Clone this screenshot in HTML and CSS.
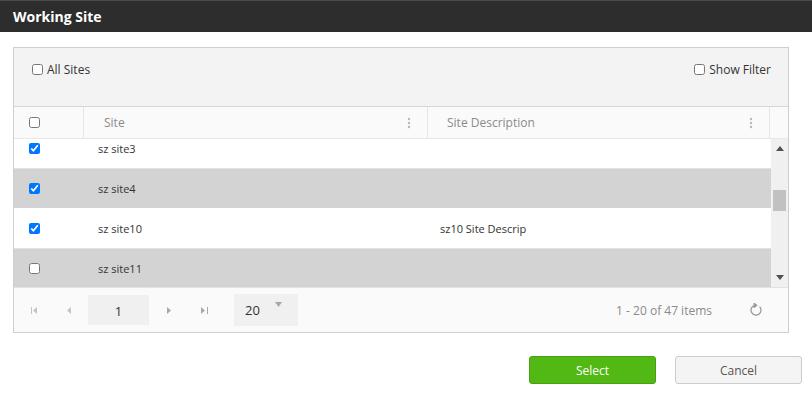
FILE: index.html
```html
<!DOCTYPE html>
<html lang="en">
<head>
    <meta charset="UTF-8">
    <title>Working Site</title>
    <link rel="stylesheet" href="styles.css">
</head>
<body>
    <header class="titlebar">Working Site</header>

    <main class="dialog">
        <div class="grid">
            <div class="toolbar">
                <label class="check-label"><input type="checkbox"> All Sites</label>
                <label class="check-label"><input type="checkbox"> Show Filter</label>
            </div>

            <div class="grid-head">
                <div class="col-check"><input type="checkbox"></div>
                <div class="col-site head-cell">
                    <span>Site</span>
                    <svg class="menu-dots" width="4" height="12" viewBox="0 0 4 12"><circle cx="2" cy="2" r="1.2"/><circle cx="2" cy="6" r="1.2"/><circle cx="2" cy="10" r="1.2"/></svg>
                </div>
                <div class="col-desc head-cell">
                    <span>Site Description</span>
                    <svg class="menu-dots" width="4" height="12" viewBox="0 0 4 12"><circle cx="2" cy="2" r="1.2"/><circle cx="2" cy="6" r="1.2"/><circle cx="2" cy="10" r="1.2"/></svg>
                </div>
                <div class="col-scroll"></div>
            </div>

            <div class="grid-body">
                <div class="rows">
                    <div class="rows-inner">
                        <div class="row">
                            <div class="col-check"><input type="checkbox" checked></div>
                            <div class="col-site">sz site3</div>
                            <div class="col-desc"></div>
                        </div>
                        <div class="row alt">
                            <div class="col-check"><input type="checkbox" checked></div>
                            <div class="col-site">sz site4</div>
                            <div class="col-desc"></div>
                        </div>
                        <div class="row">
                            <div class="col-check"><input type="checkbox" checked></div>
                            <div class="col-site">sz site10</div>
                            <div class="col-desc">sz10 Site Descrip</div>
                        </div>
                        <div class="row alt">
                            <div class="col-check"><input type="checkbox"></div>
                            <div class="col-site">sz site11</div>
                            <div class="col-desc"></div>
                        </div>
                    </div>
                </div>
                <div class="scrollbar">
                    <svg width="8" height="5" viewBox="0 0 8 5"><path d="M0 5 L4 0 L8 5 Z"/></svg>
                    <div class="thumb"></div>
                    <svg width="8" height="5" viewBox="0 0 8 5"><path d="M0 0 L4 5 L8 0 Z"/></svg>
                </div>
            </div>

            <div class="pager">
                <div class="pager-nav">
                    <span class="pager-btn">
                        <svg width="7" height="7" viewBox="0 0 7 7"><rect x="0" y="0" width="1" height="7"/><path d="M6 0 L2 3.5 L6 7 Z"/></svg>
                    </span>
                    <span class="pager-btn">
                        <svg width="5" height="7" viewBox="0 0 5 7"><path d="M4 0 L0 3.5 L4 7 Z"/></svg>
                    </span>
                    <span class="page-box">1</span>
                    <span class="pager-btn">
                        <svg width="5" height="7" viewBox="0 0 5 7"><path d="M0 0 L4 3.5 L0 7 Z"/></svg>
                    </span>
                    <span class="pager-btn">
                        <svg width="7" height="7" viewBox="0 0 7 7"><path d="M0 0 L4 3.5 L0 7 Z"/><rect x="6" y="0" width="1" height="7"/></svg>
                    </span>
                    <span class="page-size">
                        20
                        <svg width="7" height="5" viewBox="0 0 7 5"><path d="M0 0 L3.5 5 L7 0 Z"/></svg>
                    </span>
                </div>
                <div class="pager-info">
                    <span>1 - 20 of 47 items</span>
                    <svg class="refresh" width="13" height="14" viewBox="0 0 13 14"><path d="M9.6 3.6 A5 5 0 1 1 4.6 2.3" fill="none" stroke-width="1.3"/><path d="M4 0 L7.2 2.4 L4 4.6 Z"/></svg>
                </div>
            </div>
        </div>

        <div class="actions">
            <button class="btn btn-primary">Select</button>
            <button class="btn">Cancel</button>
        </div>
    </main>
</body>
</html>
```

FILE: styles.css
```css
body {
    margin: 0;
    font-family: 'Open Sans', 'Noto Sans', sans-serif;
    background-color: #ffffff;
    color: #333333;
}

input[type="checkbox"] {
    width: 11px;
    height: 11px;
    margin: 0;
}

.titlebar {
    height: 32px;
    line-height: 31px;
    padding-left: 13px;
    background-color: #2d2d2d;
    border-top: 1px solid #4a4a4a;
    box-sizing: border-box;
    color: #ffffff;
    font-size: 14px;
    font-weight: bold;
}

.dialog {
    padding: 15px 10px 0 13px;
}

.grid {
    width: 776px;
    border: 1px solid #cfcfcf;
    box-sizing: border-box;
}

.toolbar {
    height: 59px;
    display: flex;
    justify-content: space-between;
    align-items: flex-start;
    padding: 13px 17px 0 18px;
    box-sizing: border-box;
    background-color: #f3f3f4;
    border-bottom: 1px solid #d6d6d6;
    font-size: 12px;
    color: #333333;
}

.check-label {
    display: flex;
    align-items: center;
    gap: 4px;
}

.grid-head {
    height: 32px;
    display: flex;
    background-color: #fafafa;
    border-bottom: 1px solid #e8e8e8;
    box-sizing: border-box;
    font-size: 12px;
    color: #8a8a8a;
}

.col-check {
    width: 70px;
    flex-shrink: 0;
    display: flex;
    align-items: center;
    padding-left: 15px;
    box-sizing: border-box;
}

.col-site {
    width: 344px;
    flex-shrink: 0;
    padding-left: 14px;
    box-sizing: border-box;
    display: flex;
    align-items: center;
}

.col-desc {
    width: 342px;
    flex-shrink: 0;
    padding-left: 13px;
    box-sizing: border-box;
    display: flex;
    align-items: center;
}

.col-scroll {
    flex: 1;
}

.grid-head > div {
    border-right: 1px solid #e6e6e6;
}

.grid-head .col-site {
    padding-left: 20px;
}

.grid-head .col-desc {
    padding-left: 19px;
}

.grid-head .col-scroll {
    border-right: none;
}

.head-cell {
    justify-content: space-between;
    padding-right: 16px;
}

.menu-dots {
    fill: #b8b8b8;
}

.grid-body {
    height: 148px;
    display: flex;
}

.rows {
    flex: 1;
    overflow: hidden;
}

.rows-inner {
    margin-top: -11px;
}

.row {
    height: 40px;
    display: flex;
    font-size: 11px;
    color: #333333;
    background-color: #ffffff;
}

.row.alt {
    background-color: #d3d3d3;
    border-top: 1px solid #e2e2e2;
    box-sizing: border-box;
}

.row .col-site {
    padding-left: 14px;
}

.row .col-desc {
    padding-left: 12px;
}

.scrollbar {
    width: 17px;
    background-color: #f0f0f0;
    display: flex;
    flex-direction: column;
    align-items: center;
    padding: 7px 0 7px 0;
    box-sizing: border-box;
    fill: #505050;
}

.thumb {
    width: 13px;
    height: 21px;
    background-color: #c1c1c1;
    margin: 39px 0 auto 0;
}

.pager {
    height: 45px;
    display: flex;
    justify-content: space-between;
    align-items: center;
    background-color: #fafafa;
    border-top: 1px solid #e2e2e2;
    box-sizing: border-box;
    font-size: 12px;
}

.pager-nav {
    display: flex;
    align-items: center;
}

.pager-btn {
    width: 35px;
    display: flex;
    justify-content: center;
    fill: #c4c4c4;
}

.pager-btn:nth-child(1) {
    width: 40px;
}

.pager-btn:nth-child(2) {
    width: 31px;
}

.pager-btn:nth-child(4),
.pager-btn:nth-child(5) {
    fill: #a8a8a8;
}

.page-box {
    width: 61px;
    height: 30px;
    line-height: 32px;
    margin: 0 3px;
    text-align: center;
    background-color: #f0f0f0;
    color: #333333;
    font-size: 13px;
}

.page-size {
    width: 64px;
    height: 32px;
    margin-left: 12px;
    padding-left: 11px;
    box-sizing: border-box;
    background-color: #f0f0f0;
    display: flex;
    align-items: center;
    gap: 15px;
    font-size: 13px;
    color: #333333;
    fill: #a8a8a8;
}

.page-size svg {
    margin-top: -12px;
}

.pager-info {
    display: flex;
    align-items: center;
    gap: 38px;
    padding-right: 25px;
    color: #8a8a8a;
}

.refresh {
    stroke: #9a9a9a;
    fill: #9a9a9a;
}

.refresh path:first-child {
    fill: none;
}

.actions {
    display: flex;
    justify-content: flex-end;
    gap: 19px;
    margin-top: 23px;
}

.btn {
    width: 127px;
    height: 28px;
    border: 1px solid #cccccc;
    border-radius: 3px;
    background-color: #f4f4f4;
    color: #555555;
    font-family: 'Open Sans', 'Noto Sans', sans-serif;
    font-size: 12px;
}

.btn-primary {
    background-color: #52b814;
    border-color: #46a00f;
    color: #ffffff;
}
```
